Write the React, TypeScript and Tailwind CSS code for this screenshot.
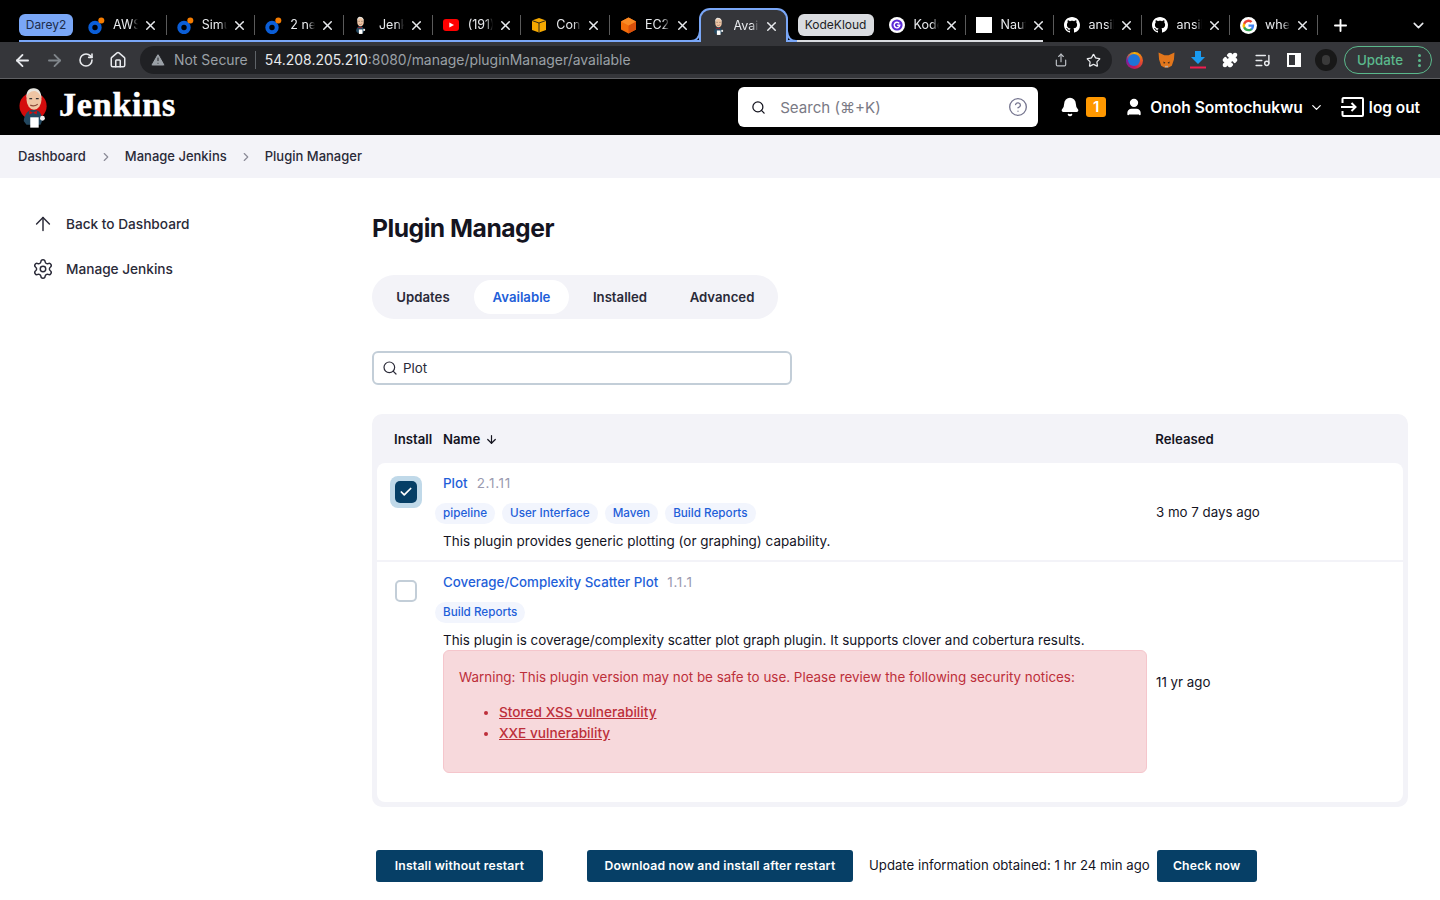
import React from "react";
import { ArrowLeft, ArrowRight, RotateCw, Home, TriangleAlert, Share, Star, Puzzle, ListMusic, X, Plus, ChevronDown, ChevronRight, Search, CircleHelp, Bell, User, ArrowUp, Settings, Check, ArrowDown } from "lucide-react";

const Darey = () => (
  <svg width="17" height="17" viewBox="0 0 17 17">
    <circle cx="7" cy="10.5" r="4.7" fill="none" stroke="#0b5ed7" strokeWidth="4" />
    <circle cx="13.3" cy="3.6" r="3" fill="#f57c00" />
  </svg>
);
const JenkinsLogo = ({ w = 32, h = 44, disc = true }: { w?: number; h?: number; disc?: boolean }) => (
  <svg width={w} height={h} viewBox="0 0 32 44">
    {disc ? <circle cx="15" cy="21" r="14.500" fill="#d40c0c" /> : null}
    <path d="M5 37 C6 28 11 25 15 25 C21 25 24 28 25 36 L23 41 L8 41 Z" fill="#23475f" />
    <ellipse cx="16" cy="14" rx="8" ry="11" fill="#eec5a4" />
    <path d="M8 13 C7 4 12 1.500 16 2 C21 2 24 6 24 13 C22 7 19 5 16 5 C12 5 9 8 8 13Z" fill="#e8e6e0" />
    <path d="M11 13 h3 M18 13 h3" stroke="#333" strokeWidth="1.2" />
    <path d="M12 20 q4 2 8 -1" stroke="#8a4a3a" strokeWidth="1.2" fill="none" />
    <path d="M11 26 l4 2 l4 -2 l0 4 l-4 -2 l-4 2z" fill="#d40c0c" />
    <rect x="12" y="33" width="9" height="11" fill="#fff" />
    <circle cx="25" cy="34" r="2.600" fill="#eee" />
  </svg>
);
const YT = () => (
  <svg width="16" height="12" viewBox="0 0 16 12">
    <rect width="16" height="12" rx="3" fill="#f00" />
    <path d="M6.300 3.400 L11 6 L6.300 8.600Z" fill="#fff" />
  </svg>
);
const Box = () => (
  <svg width="16" height="16" viewBox="0 0 16 16">
    <path d="M1 3.500 L8 1 L15 3.500 V13 L8 15.500 L1 13Z" fill="#f5a800" />
    <path d="M1 3.500 L8 6 L15 3.500 M8 6 V15.500" fill="none" stroke="#1b1b1b" strokeWidth="0.9" />
  </svg>
);
const Cube = () => (
  <svg width="17" height="17" viewBox="0 0 17 17">
    <path d="M8.500 0.500 L16 4.500 V12.500 L8.500 16.500 L1 12.500 V4.500Z" fill="#f46d0a" />
    <path d="M8.500 8.500 L16 4.500 V12.500 L8.500 16.500Z" fill="#d9500b" />
    <path d="M8.500 0.500 L16 4.500 L8.500 8.500 L1 4.500Z" fill="#fb8a24" />
  </svg>
);
const G1 = () => (
  <svg width="16" height="16" viewBox="0 0 16 16">
    <circle cx="8" cy="8" r="8" fill="#fff" />
    <circle cx="8" cy="8" r="5.600" fill="#5b2bd6" />
    <path d="M10.300 6.400 A2.800 2.800 0 1 0 10.800 8.300 H8.200" fill="none" stroke="#fff" strokeWidth="1.400" />
  </svg>
);
const Naut = () => <span className="block w-4 h-4 bg-white" />;
const Github = () => (
  <svg width="16" height="16" viewBox="0 0 16 16" fill="#fff">
    <path d="M8 0C3.58 0 0 3.58 0 8c0 3.54 2.29 6.53 5.47 7.59.4.07.55-.17.55-.38 0-.19-.01-.82-.01-1.49-2.01.37-2.53-.49-2.69-.94-.09-.23-.48-.94-.82-1.13-.28-.15-.68-.52-.01-.53.63-.01 1.08.58 1.23.82.72 1.21 1.87.87 2.33.66.07-.52.28-.87.51-1.07-1.78-.2-3.64-.89-3.64-3.95 0-.87.31-1.59.82-2.15-.08-.2-.36-1.02.08-2.12 0 0 .67-.21 2.2.82.64-.18 1.32-.27 2-.27s1.36.09 2 .27c1.53-1.04 2.2-.82 2.2-.82.44 1.1.16 1.92.08 2.12.51.56.82 1.27.82 2.15 0 3.07-1.87 3.75-3.65 3.95.29.25.54.73.54 1.48 0 1.07-.01 1.93-.01 2.2 0 .21.15.46.55.38A8.01 8.01 0 0 0 16 8c0-4.42-3.58-8-8-8z" />
  </svg>
);
const GoogleG = () => (
  <svg width="17" height="17" viewBox="0 0 16 16">
    <circle cx="8" cy="8" r="8" fill="#fff" />
    <path d="M13.300 8.100c0-.4 0-.8-.1-1.100H8v2.100h3a2.600 2.600 0 0 1-1.100 1.700v1.400h1.800c1-1 1.600-2.400 1.600-4.100z" fill="#4285f4" />
    <path d="M8 13.500c1.500 0 2.700-.5 3.700-1.300l-1.800-1.400c-.5.3-1.100.5-1.900.5-1.400 0-2.600-1-3.100-2.300H3v1.400A5.500 5.500 0 0 0 8 13.500z" fill="#34a853" />
    <path d="M4.900 9c-.2-.7-.2-1.400 0-2V5.600H3a5.500 5.500 0 0 0 0 4.900z" fill="#fbbc05" />
    <path d="M8 4.700c.8 0 1.500.3 2.100.8l1.600-1.600A5.500 5.500 0 0 0 3 5.600L4.900 7C5.300 5.700 6.600 4.700 8 4.700z" fill="#ea4335" />
  </svg>
);

const Tab = ({ icon, title, sep = true, w = "w-[88.67px]" }: { icon: React.ReactNode; title: string; sep?: boolean; w?: string }) => (
  <div className={`flex items-center h-[34px] shrink-0 ${w}`}>
    <span className="w-[35px] pl-[10px] flex items-center shrink-0">{icon}</span>
    <span className="w-[25px] h-[18px] leading-[18px] overflow-hidden whitespace-nowrap text-[12.5px] text-[#e8eaed] [mask-image:linear-gradient(to_right,black_70%,transparent)]">{title}</span>
    <X size={15} strokeWidth={2.4} className="ml-[5px] text-[#e8eaed] shrink-0" />
    <span className="flex-1" />
    {sep ? <span className="w-px h-5 bg-[#5a5a5a] shrink-0" /> : null}
  </div>
);

const Tag = ({ children }: { children: React.ReactNode }) => (
  <span className="h-[21px] px-[8px] rounded-full bg-[#f2f5fd] text-[#1f5fd9] text-[11.7px] font-medium flex items-center leading-none">{children}</span>
);

const Primary = ({ children, className = "" }: { children: React.ReactNode; className?: string }) => (
  <span className={`h-[32px] flex items-center justify-center rounded-[3px] bg-[#063f66] text-white text-[12.2px] font-semibold tracking-[0.2px] ${className}`}>{children}</span>
);

export default function App() {
  return (
    <div className="w-[1440px] h-[900px] overflow-hidden bg-white text-[#14141f] font-['Inter',sans-serif] text-[14px]">
      {/* tab strip */}
      <div className="h-[42px] bg-black flex items-end pl-[19px] relative">
        <span className="absolute left-[19px] top-[40px] w-[778px] h-[2px] bg-[#7aa7f7]" />
        <span className="absolute left-[797px] top-[40px] w-[246px] h-[2px] bg-[#dadce0]" />
        <div className="flex items-center h-[34px] relative">
          <span className="w-[54px] h-[22px] rounded-[6px] bg-[#7aa7f7] text-[#1c2c4a] text-[12px] flex items-center justify-center mr-[5px]">Darey2</span>
          <Tab icon={<Darey />} title="AWS" />
          <Tab icon={<Darey />} title="Simu" />
          <Tab icon={<Darey />} title="2 new" />
          <Tab icon={<JenkinsLogo w={13} h={18} disc={false} />} title="Jenkins" />
          <Tab icon={<YT />} title="(191)" />
          <Tab icon={<Box />} title="Conn" />
          <Tab icon={<Cube />} title="EC2" sep={false} />
          <div className="relative z-10 h-[34px] w-[89px] rounded-t-[11px] border-2 border-b-0 border-[#7aa7f7] bg-[#35363a] flex items-center">
            <svg className="absolute left-[-11px] bottom-0" width="11" height="11" viewBox="0 0 11 11"><path d="M0 10 H1 Q9 10 10 0" fill="none" stroke="#7aa7f7" strokeWidth="2" /></svg>
            <svg className="absolute right-[-11px] bottom-0" width="11" height="11" viewBox="0 0 11 11"><path d="M11 10 H10 Q2 10 1 0" fill="none" stroke="#7aa7f7" strokeWidth="2" /></svg>
            <span className="w-[33px] pl-[11px] shrink-0"><JenkinsLogo w={13} h={18} disc={false} /></span>
            <span className="w-[25px] h-[18px] leading-[18px] overflow-hidden whitespace-nowrap text-[12.5px] text-[#e8eaed] [mask-image:linear-gradient(to_right,black_70%,transparent)]">Available</span>
            <X size={15} strokeWidth={2.4} className="ml-[5px] text-[#e8eaed]" />
          </div>
          <span className="ml-[10px] w-[76px] h-[22px] rounded-[6px] bg-[#dadce0] text-[#202124] text-[12px] flex items-center justify-center mr-[5px]">KodeKloud</span>
          <Tab icon={<G1 />} title="Kode" w="w-[87px]" />
          <Tab icon={<Naut />} title="Nautilus" w="w-[88px]" />
          <Tab icon={<Github />} title="ansible" w="w-[88px]" />
          <Tab icon={<Github />} title="ansible" w="w-[88.5px]" />
          <Tab icon={<GoogleG />} title="where" w="w-[88px]" />
          <span className="w-[45px] flex justify-center"><Plus size={19} strokeWidth={2.4} className="text-white" /></span>
          <span className="ml-[45px] w-[20px] flex justify-center"><ChevronDown size={17} strokeWidth={2.2} className="text-[#e8eaed]" /></span>
        </div>
      </div>

      {/* toolbar */}
      <div className="h-[37px] bg-[#35363a] border-b border-[#5f6063] flex items-start pt-[4px] pl-[6px]">
        <span className="w-[32px] h-[28px] flex items-center justify-center"><ArrowLeft size={19} strokeWidth={2.3} className="text-[#e8eaed]" /></span>
        <span className="w-[32px] h-[28px] flex items-center justify-center"><ArrowRight size={19} strokeWidth={2.3} className="text-[#80868b]" /></span>
        <span className="w-[32px] h-[28px] flex items-center justify-center"><RotateCw size={16} strokeWidth={2.4} className="text-[#e8eaed]" /></span>
        <span className="w-[32px] h-[28px] flex items-center justify-center"><Home size={18} strokeWidth={2} className="text-[#e8eaed]" /></span>
        <div className="ml-[6px] w-[972px] h-[28px] rounded-full bg-[#202124] flex items-center pl-[10px] text-[13.95px] leading-[20px]">
          <TriangleAlert size={16} fill="#9aa0a6" strokeWidth={1.5} className="text-[#202124]" />
          <span className="ml-[8px] text-[#9aa0a6]">Not Secure</span>
          <span className="ml-[7px] w-px h-[18px] bg-[#5f6368]" />
          <span className="ml-[9px] text-[#e8eaed]">54.208.205.210</span>
          <span className="text-[#9aa0a6]">:8080/manage/pluginManager/available</span>
          <span className="flex-1" />
          <Share size={14} className="text-[#bdc1c6] mr-[2px]" />
          <Star size={15} className="text-[#e8eaed] ml-[16px] mr-[11px]" />
        </div>
        <div className="ml-[6px] flex">
          <span className="w-[32px] h-[28px] flex items-center justify-center">
            <span className="w-[17px] h-[17px] rounded-full bg-[conic-gradient(#f5b400,#e8562a,#c2185b,#7b1fa2,#f5b400)] flex items-center justify-center">
              <span className="w-[12px] h-[12px] rounded-full bg-[#1e73d8]" />
            </span>
          </span>
          <span className="w-[32px] h-[28px] flex items-center justify-center">
            <svg width="17" height="16" viewBox="0 0 16 15"><path d="M0.500 0.500 L6 3 H10 L15.500 0.500 L15 7 L13 13 L10 14.500 H6 L3 13 L1 7Z" fill="#e2761b" /><path d="M5 9 L7 10 L5.500 11Z M11 9 L9 10 L10.500 11Z" fill="#222" /><path d="M6.500 13 H9.500 V14.500 H6.500Z" fill="#c0ad9e" /></svg>
          </span>
          <span className="w-[32px] h-[28px] flex items-center justify-center">
            <svg width="16" height="18" viewBox="0 0 16 18"><path d="M5 0 H11 V6 H15 L8 13 L1 6 H5Z" fill="#1a9bf0" /><rect y="15.500" width="16" height="2" fill="#f01e50" /></svg>
          </span>
          <span className="w-[32px] h-[28px] flex items-center justify-center"><Puzzle size={16} fill="#fff" className="text-white" /></span>
          <span className="w-[32px] h-[28px] flex items-center justify-center"><ListMusic size={17} className="text-[#e8eaed]" /></span>
          <span className="w-[32px] h-[28px] flex items-center justify-center">
            <span className="w-[14px] h-[14px] border-2 border-white border-r-[6px] block" />
          </span>
          <span className="w-[32px] h-[28px] flex items-center justify-center">
            <span className="w-[22px] h-[22px] rounded-full bg-[#181818] flex items-center justify-center">
              <span className="w-[8px] h-[10px] rounded-full bg-[#3a3a3a]" />
            </span>
          </span>
        </div>
        <div className="ml-[2px] w-[88px] h-[28px] rounded-full border border-[#5bb98c] flex items-center pl-[12px] text-[13.3px] leading-[20px] font-medium text-[#5bb98c]">
          Update
          <span className="ml-[15px] flex flex-col gap-[2px]">
            <span className="w-[3px] h-[3px] rounded-full bg-[#5bb98c]" />
            <span className="w-[3px] h-[3px] rounded-full bg-[#5bb98c]" />
            <span className="w-[3px] h-[3px] rounded-full bg-[#5bb98c]" />
          </span>
        </div>
      </div>

      {/* Jenkins header */}
      <header className="h-[56px] bg-black flex items-center pl-[19px] pr-[20px] text-white">
        <JenkinsLogo w={30} h={42} />
        <span className="ml-[10px] -mt-[5px] font-['Liberation_Serif',serif] font-bold text-[34px] tracking-[0.8px] leading-none [-webkit-text-stroke:0.5px_white]">Jenkins</span>
        <span className="flex-1" />
        <div className="w-[300px] h-[40px] rounded-[6px] bg-white flex items-center pl-[13px] pr-[10px]">
          <Search size={15} strokeWidth={2} className="text-[#14141f]" />
          <span className="ml-[14px] mt-[2px] text-[15.1px] leading-[22px] text-[#7a7a85]">Search (⌘+K)</span>
          <span className="flex-1" />
          <CircleHelp size={20} strokeWidth={1.6} className="text-[#75758f]" />
        </div>
        <Bell size={20} fill="#fff" className="ml-[22px]" />
        <span className="ml-[6px] w-[20px] h-[20px] rounded-[3px] bg-[#ff9800] text-white text-[15px] font-semibold flex items-center justify-center">1</span>
        <User size={20} fill="#fff" className="ml-[18px]" />
        <span className="ml-[6px] mt-[2px] text-[15.6px] leading-[22px] font-semibold">Onoh Somtochukwu</span>
        <ChevronDown size={15} strokeWidth={2} className="ml-[6px]" />
        <svg width="23" height="20" viewBox="0 0 23 20" fill="none" stroke="#fff" strokeWidth="2" className="ml-[17px]">
          <path d="M1.500 6 V2 a1 1 0 0 1 1-1 H21 a1 1 0 0 1 1 1 V18 a1 1 0 0 1-1 1 H2.500 a1 1 0 0 1-1-1 V14" />
          <path d="M0 10 H14 M10.500 6 L14.500 10 L10.500 14" />
        </svg>
        <span className="ml-[5px] mt-[2px] text-[15.4px] leading-[22px] font-semibold">log out</span>
      </header>

      {/* breadcrumb */}
      <nav className="h-[43px] bg-[#f3f3f8] flex items-center pl-[18px] text-[13px] font-medium text-[#2a2a38]">
        <span>Dashboard</span>
        <ChevronRight size={14} className="ml-[13px] mr-[12px] text-[#8b8b98]" />
        <span>Manage Jenkins</span>
        <ChevronRight size={14} className="ml-[12px] mr-[12px] text-[#8b8b98]" />
        <span>Plugin Manager</span>
      </nav>

      <div className="flex">
        {/* sidebar */}
        <aside className="w-[372px] shrink-0 pt-[35px] pl-[32px] flex flex-col gap-[23px] text-[13.65px] font-medium text-[#2a2a38]">
          <div className="flex items-center h-[22px]">
            <ArrowUp size={22} strokeWidth={1.6} />
            <span className="ml-[12px]">Back to Dashboard</span>
          </div>
          <div className="flex items-center h-[22px]">
            <Settings size={22} strokeWidth={1.6} />
            <span className="ml-[12px]">Manage Jenkins</span>
          </div>
        </aside>

        {/* main */}
        <main className="w-[1036px]">
          <h1 className="mt-[33px] h-[34px] text-[24.7px] leading-[34px] font-bold text-[#14141f] tracking-[-0.5px]">Plugin Manager</h1>
          <div className="mt-[30px] w-[406px] h-[44px] rounded-full bg-[#f3f3f8] flex items-center pl-[5px] text-[13.2px] leading-[20px] font-semibold text-[#2a2a38]">
            <span className="w-[92px] text-center">Updates</span>
            <span className="ml-[5px] w-[95px] h-[34px] rounded-full bg-white text-[#1f5fd9] flex items-center justify-center">Available</span>
            <span className="w-[102px] text-center">Installed</span>
            <span className="w-[102px] text-center">Advanced</span>
          </div>
          <div className="mt-[32px] w-[420px] h-[34px] rounded-[6px] border-2 border-[#c3ced8] flex items-center pl-[8px] text-[13.4px] leading-[20px] text-[#2a2a38]">
            <Search size={16} strokeWidth={1.8} />
            <span className="ml-[5px]">Plot</span>
          </div>

          {/* table */}
          <div className="mt-[29px] h-[393px] rounded-[10px] bg-[#f3f3f8] p-[5px] pt-0">
            <div className="h-[49px] pt-[2px] flex items-center text-[13.2px] font-semibold text-[#14141f]">
              <span className="ml-[17px] w-[49px]">Install</span>
              <span>Name</span>
              <ArrowDown size={13} strokeWidth={2.2} className="ml-[5px]" />
              <span className="ml-[657px]">Released</span>
            </div>
            <div className="h-[97px] bg-white rounded-t-[8px] flex">
              <div className="w-[66px] shrink-0 pt-[13px] pl-[13px]">
                <span className="w-[32px] h-[32px] rounded-[8px] bg-[#c0d9e9] flex items-center justify-center">
                  <span className="w-[22px] h-[22px] rounded-[5px] bg-[#063f66] flex items-center justify-center">
                    <Check size={14} strokeWidth={3} className="text-white" />
                  </span>
                </span>
              </div>
              <div className="w-[713px] shrink-0 pt-[10px]">
                <div className="flex items-baseline h-[20px]">
                  <span className="text-[13.4px] font-medium text-[#1f5fd9]">Plot</span>
                  <span className="ml-[9px] text-[13.5px] tracking-[0.7px] text-[#9a9aaf]">2.1.11</span>
                </div>
                <div className="-ml-[8px] mt-[10px] flex gap-[7px]">
                  <Tag>pipeline</Tag><Tag>User Interface</Tag><Tag>Maven</Tag><Tag>Build Reports</Tag>
                </div>
                <p className="mt-[7px] leading-[20px] text-[13.47px] text-[#14141f]">This plugin provides generic plotting (or graphing) capability.</p>
              </div>
              <div className="self-center mt-[2px] text-[13.3px]">3 mo 7 days ago</div>
            </div>
            <div className="mt-[2px] h-[240px] bg-white rounded-b-[8px] flex">
              <div className="w-[66px] shrink-0 pt-[18px] pl-[18px]">
                <span className="block w-[22px] h-[22px] rounded-[5px] border-2 border-[#c3ced8]" />
              </div>
              <div className="w-[713px] shrink-0 pt-[10px]">
                <div className="flex items-baseline h-[20px]">
                  <span className="text-[13.3px] font-medium text-[#1f5fd9]">Coverage/Complexity Scatter Plot</span>
                  <span className="ml-[9px] text-[13.5px] tracking-[0.7px] text-[#9a9aaf]">1.1.1</span>
                </div>
                <div className="-ml-[8px] mt-[10px] flex gap-[7px]">
                  <Tag>Build Reports</Tag>
                </div>
                <p className="mt-[7px] leading-[20px] text-[13.45px] text-[#14141f]">This plugin is coverage/complexity scatter plot graph plugin. It supports clover and cobertura results.</p>
                <div className="w-[704px] h-[123px] rounded-[6px] bg-[#f7d9dc] border border-[#f5c6cc] pl-[15px] pt-[16px] text-[13.4px] text-[#bd2f3a]">
                  <p className="leading-[20px]">Warning: This plugin version may not be safe to use. Please review the following security notices:</p>
                  <ul className="mt-[15px] ml-[40px] list-disc text-[13.65px] font-medium leading-[21px]">
                    <li className="underline">Stored XSS vulnerability</li>
                    <li className="underline">XXE vulnerability</li>
                  </ul>
                </div>
              </div>
              <div className="self-center mt-[2px] text-[13.3px]">11 yr ago</div>
            </div>
          </div>

          {/* footer buttons */}
          <div className="mt-[43px] ml-[4px] flex items-center">
            <Primary className="w-[167px]">Install without restart</Primary>
            <Primary className="ml-[44px] w-[266px]">Download now and install after restart</Primary>
            <span className="ml-[16px] -mt-px text-[13.2px]">Update information obtained: 1 hr 24 min ago</span>
            <Primary className="ml-[7px] w-[100px]">Check now</Primary>
          </div>
        </main>
      </div>
    </div>
  );
}
